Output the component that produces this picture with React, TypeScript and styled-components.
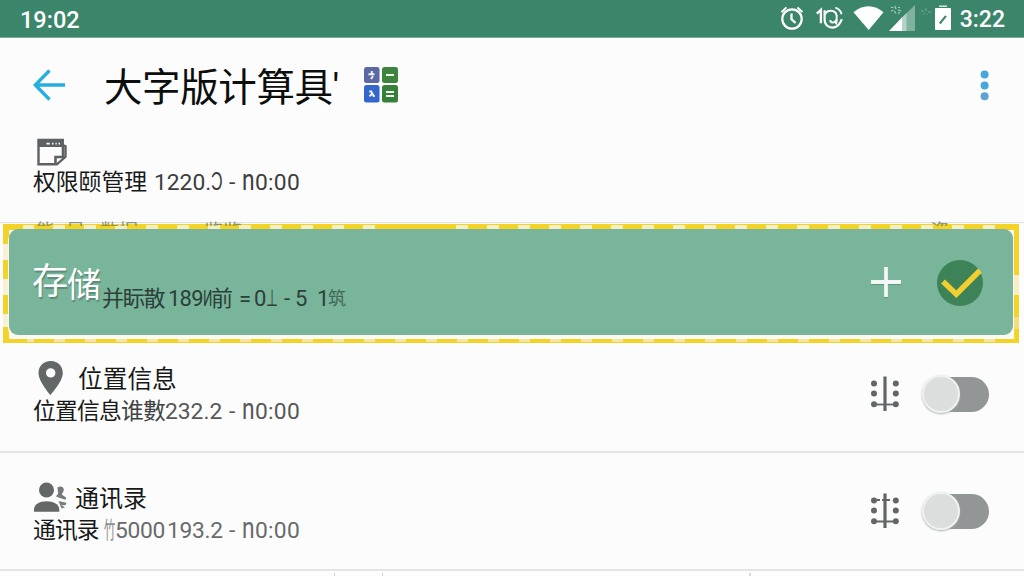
import styled, { createGlobalStyle } from 'styled-components';

interface SegmentProps {
  $width: number;
  $color?: string;
  $spacing?: number;
  $size?: number;
}

interface PermissionRowProps {
  icon: any;
  title: string;
  linked?: boolean;
  height: number;
  lift: number;
  gap: number;
  titleSize: number;
  children: any;
}

function AlarmIcon() {
  return (
    <svg width="24" height="26" viewBox="0 0 24 26" fill="none" stroke="#fff">
      <circle cx="12" cy="14" r="9.7" strokeWidth="2.2" />
      <path d="M11.5 8.5v5.7l4 3.8" strokeWidth="2.3" />
      <path d="M1.5 7.2 6.4 2.4M17.4 2.4l5 4.6" strokeWidth="2" />
    </svg>
  );
}

function RingIcon() {
  return (
    <svg width="28" height="26" viewBox="0 0 28 26" fill="none" stroke="#fff">
      <path d="M.8 8.6 4.9 4.8v13.4" strokeWidth="2.3" />
      <path
        d="M8.6 5.2v9.2c0 6.6 6 9.6 11.3 7.4 3-1.4 4.7-4.3 6-7.6"
        strokeWidth="2.2"
      />
      <path
        d="M9 9.4C11 4.6 19.4 4.4 20.6 10.4c.7 3.8-.8 7.2-3.8 7.2-1.8 0-2.6-1-2.4-2.6M20.6 10.4c.4 3 .4 6-.6 9"
        strokeWidth="2"
      />
      <path d="M19.4 2.7c3.6 1.2 5.4 3.2 6.2 6.6" strokeWidth="1.8" />
    </svg>
  );
}

function WifiIcon() {
  return (
    <svg width="31" height="26" viewBox="0 0 31 26">
      <path d="M.5 7.3C9.2-.7 21.8-.7 30.5 7.3L15.7 25z" fill="#fff" />
    </svg>
  );
}

function SignalIcon() {
  return (
    <svg width="26" height="26" viewBox="0 0 26 26">
      <path d="M26 0v26H12V13.6z" fill="#7fb3a0" />
      <path d="M17.5 8.2V26H12V13.6z" fill="#b4d3c8" />
      <path d="M13 12.6V26H0z" fill="#fff" />
      <path
        d="M2 2.5h2.5M6 1l1 3M2 6l2.5-.8M5.5 6l1.5 2.5M9 2.5h2M9 5l3 .8M9 8.5l2-1"
        stroke="#a8ccbf"
        strokeWidth="1.2"
      />
    </svg>
  );
}

function SparkleIcon() {
  return (
    <svg width="20" height="26" viewBox="0 0 20 26">
      <path
        d="M6 6h3M11 3v3M13 7h3M8 9.5l1.5-1M12.5 9.5l-1-1"
        stroke="#72a995"
      />
    </svg>
  );
}

function BatteryIcon() {
  return (
    <svg width="16" height="26" viewBox="0 0 16 26">
      <path d="M4 1.2h8" stroke="#d5e7e0" strokeWidth="1.5" />
      <rect y="3" width="16" height="22" rx=".8" fill="#fff" />
      <path d="m4.8 18.5 6.2-7.7" stroke="#3b8569" strokeWidth="2" />
    </svg>
  );
}

function BackIcon() {
  return (
    <svg width="33" height="32" viewBox="0 0 33 32" fill="none">
      <path
        d="M32 16H3M16.5 1.5 2.3 16l14.2 14.5"
        stroke="#27aee0"
        strokeWidth="3.3"
      />
    </svg>
  );
}

function CalculatorIcon() {
  return (
    <svg width="34" height="36" viewBox="0 0 34 36" fill="none">
      <rect width="15.5" height="16" rx="2.5" fill="#5b68a5" />
      <rect x="18" width="16" height="16" rx="2.5" fill="#3d853f" />
      <rect y="18" width="15.5" height="17.5" rx="2.5" fill="#3466cc" />
      <rect x="18" y="18" width="16" height="17.5" rx="2.5" fill="#37803a" />
      <path
        d="M4.5 7.2h6M7.8 4v3.2M9 9l-2 3M22 8h8M22 25h8M22 29h8M5.2 24.5h2l2.4 4.5h1.2M8.8 26.2l-3.4 3"
        stroke="#f1f5f2"
        strokeWidth="1.9"
      />
    </svg>
  );
}

function MoreIcon() {
  return (
    <svg width="10" height="32" viewBox="0 0 10 32">
      <circle cx="4.6" cy="4.5" r="4" fill="#48a6db" />
      <circle cx="4.6" cy="15.5" r="4" fill="#48a6db" />
      <circle cx="4.6" cy="26.3" r="4" fill="#5da2d5" />
    </svg>
  );
}

function NoteIcon() {
  return (
    <svg width="30" height="28" viewBox="0 0 30 28" fill="none">
      <path
        d="M1.5 26.3V2h24.2v5l2.8 1.2v10.6l-8.6 7.5z"
        stroke="#5d6163"
        strokeWidth="2.4"
      />
      <path d="M1 1h25.5v8H1z" fill="#5d6163" />
      <path
        d="M9.5 5.7h3.2M15 5.7h1.5M18.5 5.7h1.2M21.5 5.7h1.5"
        stroke="#fff"
        strokeWidth="1.8"
      />
      <path
        d="M26 8v12M18.5 26v-7H26"
        stroke="#5d6163"
        strokeWidth="2.6"
      />
    </svg>
  );
}

function PinIcon() {
  return (
    <svg width="26" height="35" viewBox="0 0 26 35">
      <path
        d="M12.7 0C5.4 0 .5 5.2.5 12.2.5 20.5 12.4 34 12.4 34S24.8 20.5 24.8 12.2C24.8 5.2 20 0 12.7 0zm0 7.2a4.7 4.7 0 1 1 0 9.4 4.7 4.7 0 0 1 0-9.4z"
        fill="#636768"
        fillRule="evenodd"
      />
    </svg>
  );
}

function PeopleIcon() {
  return (
    <svg width="34" height="31" viewBox="0 0 34 31" fill="#636768">
      <circle cx="12.5" cy="8" r="7.5" />
      <path d="M0 29.8v-2.2c0-5.4 5.5-8.4 12.5-8.4s12.8 3 12.8 8.4v2.2z" />
      <path
        d="M23.5 5.5c3.4-2.2 6.5-.6 6.3 2.6-.2 2.2-1.8 3-2 4.4l4.5 3.2-1 2-6-2-3.5-1.5c2.5-2 2.6-3 2.2-4.5z"
        opacity=".88"
      />
      <path d="m24.5 19 8 1.8-1 2.4-4-.3 3.5 2.5-3.5 1.1z" opacity=".85" />
    </svg>
  );
}

function SlidersIcon({ linked }: { linked?: boolean }) {
  return (
    <svg width="30" height="36" viewBox="0 0 30 36" fill="#626667">
      <path
        d={linked ? 'M3 28.5h24M3 7h7M12 7h8' : 'M3 28.5h24'}
        stroke="#626667"
        strokeWidth="1.8"
      />
      <path d="M13.4.5h3.2V35h-3.2z" />
      {[7.5, 17.5, 28.3].map((y) => (
        <g key={y}>
          <circle cx="4" cy={y} r="3" />
          <circle cx="25.8" cy={y} r="3" />
        </g>
      ))}
    </svg>
  );
}

function AddIcon() {
  return (
    <svg width="32" height="33" viewBox="0 0 32 33">
      <path d="M1 17h30M16 2v30" stroke="#5f957e" strokeWidth="4" />
      <path d="M1 16h30M16 1v30" stroke="#f3f7f5" strokeWidth="3.8" />
    </svg>
  );
}

function CheckBadge() {
  return (
    <svg width="46" height="48" viewBox="0 0 46 48" fill="none">
      <circle cx="23" cy="24" r="23" fill="#3e8357" />
      <path d="m6 22.5 13.3 12.7L43 11.5" stroke="#f2cf30" strokeWidth="5.5" />
    </svg>
  );
}

function ZeroTime({ color }: { color: string }) {
  return (
    <Segment $width={60} $color={color} $spacing={0.3}>
      <Glyph $x={1} $y={1.27}>
        n
      </Glyph>
      0:00
    </Segment>
  );
}

function PermissionRow({
  icon,
  title,
  linked = false,
  height,
  lift,
  gap,
  titleSize,
  children,
}: PermissionRowProps) {
  return (
    <Row $height={height} $lift={lift}>
      <RowText $drop={linked ? 4 : 0}>
        <RowTitle $gap={gap} $size={titleSize}>
          {icon}
          <span>{title}</span>
        </RowTitle>
        <Summary>{children}</Summary>
      </RowText>
      <SlidersIcon linked={linked} />
      <Switch>
        <Thumb />
      </Switch>
    </Row>
  );
}

function App() {
  return (
    <Screen>
      <GlobalStyle />
      <StatusBar>
        <Clock $size={23.5}>19:02</Clock>
        <StatusIcons>
          <AlarmIcon />
          <RingIcon />
          <WifiIcon />
          <SignalIcon />
          <SparkleIcon />
          <BatteryIcon />
          <Clock $size={23}>3:22</Clock>
        </StatusIcons>
      </StatusBar>

      <Toolbar>
        <BackIcon />
        <Title>大字版计算具'</Title>
        <CalculatorIcon />
        <Spacer />
        <MoreIcon />
      </Toolbar>

      <Overview>
        <NoteIcon />
        <Summary>
          <Segment $width={121}>权限颐管理</Segment>
          <Segment $width={75} $color="#3c3e3f">
            1220.<Glyph $x={0.7} $y={1.12}>Ɔ</Glyph>
          </Segment>
          <Segment $width={13} $color="#3c3e3f">-</Segment>
          <ZeroTime color="#3c3e3f" />
        </Summary>
      </Overview>

      <Highlight>
        <CutText>
          <Segment $width={30}>能</Segment>
          <Segment $width={34}>显</Segment>
          <Segment $width={104}>数据</Segment>
          <Segment $width={726}>览览</Segment>
          <Segment $width={40}>资</Segment>
        </CutText>
        <Panel>
          <PanelTitle>
            <span>存</span>
            <span>储</span>
          </PanelTitle>
          <PanelSummary>
            <Segment $width={66} $spacing={-1.2}>并眎散</Segment>
            <Segment $width={43} $spacing={-0.8}>
              189<Glyph $x={0.6}>И</Glyph>
            </Segment>
            <Segment $width={28}>前</Segment>
            <Segment $width={15}>=</Segment>
            <Segment $width={30}>
              0<Glyph $x={0.55}>⊥</Glyph>
            </Segment>
            <Segment $width={11}>-</Segment>
            <Segment $width={22}>5</Segment>
            <Segment $width={11}>1</Segment>
            <Segment $width={20} $color="#446858" $size={18}>筑</Segment>
          </PanelSummary>
          <Spacer />
          <AddIcon />
          <CheckBadge />
        </Panel>
      </Highlight>

      <PermissionRow
        icon={<PinIcon />}
        title="位置信息"
        height={110}
        lift={6}
        gap={14}
        titleSize={24.7}
      >
        <Segment $width={88} $spacing={-0.8}>位置信息</Segment>
        <Segment $width={44} $color="#3f4243" $spacing={-0.8}>谁數</Segment>
        <Segment $width={64} $color="#555859">232.2</Segment>
        <Segment $width={13} $color="#555859">-</Segment>
        <ZeroTime color="#555859" />
      </PermissionRow>

      <PermissionRow
        icon={<PeopleIcon />}
        title="通讯录"
        linked
        height={118}
        lift={0}
        gap={7}
        titleSize={24}
      >
        <Segment $width={71} $spacing={-0.9}>通讯录</Segment>
        <Segment $width={11} $color="#8b8e8f">
          <Glyph $x={0.5}>竹</Glyph>
        </Segment>
        <Segment $width={52} $color="#686b6c" $spacing={-0.3}>5000</Segment>
        <Segment $width={62} $color="#686b6c" $spacing={-0.3}>193.2</Segment>
        <Segment $width={13} $color="#686b6c">-</Segment>
        <ZeroTime color="#686b6c" />
      </PermissionRow>
      <Footer />
    </Screen>
  );
}

export default App;

const GlobalStyle = createGlobalStyle`
  * {
    box-sizing: border-box;
  }

  body {
    margin: 0;
    overflow: hidden;
  }

  svg {
    display: block;
    flex: none;
  }
`;

const Screen = styled.div`
  display: flex;
  flex-direction: column;
  width: 1024px;
  height: 576px;
  overflow: hidden;
  background: #fbfcfb;
  color: #171918;
  font-family: Roboto, 'Noto Sans CJK SC', sans-serif;
`;

const StatusBar = styled.header`
  flex: none;
  display: flex;
  justify-content: space-between;
  height: 38px;
  padding: 0 19px 0 20px;
  background: #3b866a;
  border-bottom: 1px solid #78ae9b;
`;

const Clock = styled.span<{ $size: number }>`
  color: #fff;
  font-size: ${({ $size }) => $size}px;
  font-weight: 500;
  line-height: 40px;
`;

const StatusIcons = styled.div`
  display: flex;
  align-items: flex-start;

  > svg {
    margin-top: 5px;
  }
  > svg:nth-child(2) {
    margin-left: 12px;
  }
  > svg:nth-child(3) {
    margin-left: 9px;
  }
  > svg:nth-child(4) {
    margin-left: 5px;
  }
  > span:last-child {
    margin-left: 9px;
  }
`;

const Toolbar = styled.div`
  flex: none;
  display: flex;
  align-items: center;
  height: 96px;
  padding: 0 34px 2px 33px;

  > svg:last-child {
    margin-top: 2px;
  }
`;

const Title = styled.h1`
  width: 260px;
  margin: 5px 0 0 38px;
  color: #0c0e0d;
  font-size: 38.5px;
  font-weight: 400;
  line-height: 60px;
  letter-spacing: -0.4px;
  white-space: nowrap;
`;

const Spacer = styled.div`
  flex: 1;
`;

const Overview = styled.section`
  flex: none;
  height: 89px;
  padding: 4px 33px 0;
  border-bottom: 1px solid #dfe2e2;

  > svg {
    margin-left: 4px;
  }
`;

const Summary = styled.div`
  display: flex;
  height: 32px;
  font-size: 22.8px;
  line-height: 34px;
`;

const Segment = styled.span<SegmentProps>`
  flex: none;
  width: ${({ $width }) => $width}px;
  color: ${({ $color }) => $color || 'inherit'};
  font-size: ${({ $size }) => ($size ? `${$size}px` : 'inherit')};
  letter-spacing: ${({ $spacing }) => $spacing || 0}px;
  white-space: nowrap;
`;

const Glyph = styled.span<{ $x: number; $y?: number }>`
  display: inline-block;
  transform: scale(${({ $x }) => $x}, ${({ $y }) => $y || 1});
  transform-origin: 0 68%;
`;

const Highlight = styled.section`
  flex: none;
  position: relative;
  height: 120px;
  margin: 0 5px 0 3px;
  padding: 6px 6px 8px;
  background:
    linear-gradient(#f4d328, #f4d328) 0 2px / 20px 5px no-repeat,
    linear-gradient(#f4d328, #f4d328) 100% 2px / 20px 5px no-repeat,
    linear-gradient(#f4d328, #f4d328) 375px 2px / 75px 5px no-repeat,
    linear-gradient(#f4d328, #f4d328) 0 1px / 100% 1px no-repeat,
    repeating-linear-gradient(90deg, #f4d328 0 19px, #f5edc4 19px 31px) 0 2px /
      100% 5px no-repeat,
    linear-gradient(#f4d328, #f4d328) 0 100% / 24px 4px no-repeat,
    linear-gradient(#f4d328, #f4d328) 100% 100% / 24px 4px no-repeat,
    linear-gradient(#f4d328, #f4d328) 0 100% / 100% 1px no-repeat,
    repeating-linear-gradient(90deg, #f4d328 0 20px, #f4e69c 20px 31px) 0 100% /
      100% 4px no-repeat,
    linear-gradient(#f4d328, #f4d328) 0 100% / 6px 16px no-repeat,
    repeating-linear-gradient(#f4d328 0 19px, #f8f1d5 19px 35px) 0 2px / 6px
      100% no-repeat,
    linear-gradient(
        #f4d328 0 50px,
        #f7efc1 50px 70px,
        #f4d328 70px 92px,
        #f2df7b 92px 104px,
        #f4d328 104px
      )
      100% 2px / 5px 100% no-repeat,
    #fbfbf5;
`;

/* the row scrolled underneath, only its edge is visible */
const CutText = styled.div`
  position: absolute;
  top: -2px;
  left: 33px;
  display: flex;
  width: 970px;
  height: 5px;
  overflow: hidden;
  color: #6c7a5c;
  font-size: 19px;
  line-height: 22px;
  opacity: 0.75;
`;

const Panel = styled.div`
  display: flex;
  align-items: center;
  height: 106px;
  padding: 0 30px 0 23px;
  background: #79b59b;
  border-radius: 9px;
  box-shadow: 0 2px 0 1px #fafaf3;

  > svg:last-child {
    margin: 2px 0 0 35px;
  }
`;

const PanelTitle = styled.h2`
  display: flex;
  margin: 2px 0 0;
  color: #fff;
  font-size: 36px;
  font-weight: 400;
  line-height: 50px;
  text-shadow: 1px 2px 1px #5a8b76;

  > span {
    width: 35px;
  }
  > span:last-child {
    font-size: 34px;
    padding-top: 3px;
  }
`;

const PanelSummary = styled.div`
  display: flex;
  margin-top: 33px;
  color: #2c4039;
  font-size: 22px;
  line-height: 30px;
`;

const Row = styled.section<{ $height: number; $lift: number }>`
  flex: none;
  display: flex;
  align-items: center;
  height: ${({ $height }) => $height}px;
  padding: 0 35px ${({ $lift }) => $lift}px 33px;
  border-bottom: 2px solid #e3e5e5;
`;

const RowText = styled.div<{ $drop: number }>`
  flex: 1;
  padding-top: ${({ $drop }) => $drop}px;
`;

const RowTitle = styled.div<{ $gap: number; $size: number }>`
  display: flex;
  align-items: center;
  gap: ${({ $gap }) => $gap}px;
  height: 34px;
  padding-left: ${({ $gap }) => ($gap > 10 ? 5 : 1)}px;
  font-size: ${({ $size }) => $size}px;
  line-height: 34px;

  > span {
    padding-top: 4px;
  }
`;

const Switch = styled.div`
  display: flex;
  align-items: center;
  width: 66px;
  height: 35px;
  margin-left: 23px;
  background: #929697;
  border-radius: 18px;
`;

const Thumb = styled.div`
  width: 38px;
  height: 38px;
  margin-left: -1px;
  background: #dcdddd;
  border: 2px solid #f0f1f1;
  border-radius: 50%;
  box-shadow: 0 1px 2px #aaadad;
`;

const Footer = styled.div`
  flex: 1;
  margin-top: 2px;
  background:
    linear-gradient(#c9cccc, #c9cccc) 334px 0 / 1px 4px no-repeat,
    linear-gradient(#c9cccc, #c9cccc) 382px 0 / 1px 4px no-repeat,
    linear-gradient(#d8dada, #d8dada) 749px 0 / 2px 3px no-repeat;
`;
